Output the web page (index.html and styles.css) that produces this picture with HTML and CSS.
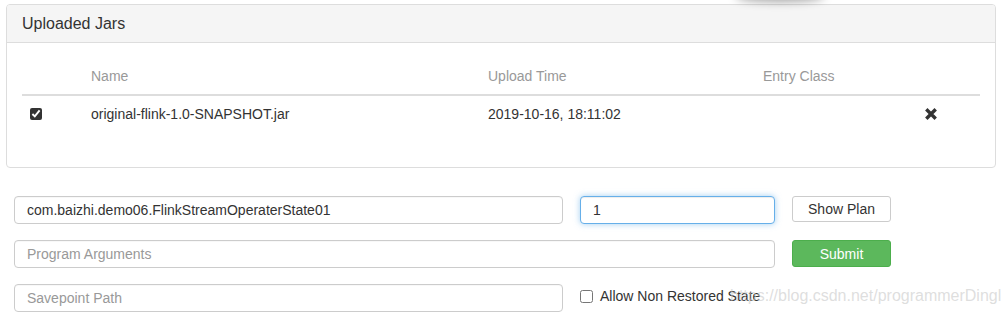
FILE: index.html
```html
<!DOCTYPE html>
<html lang="en">

<head>
    <meta charset="UTF-8">
    <title>Flink | Submit new Job</title>
    <link rel="stylesheet" href="styles.css">
</head>

<body>
    <div class="top-shadow"></div>

    <div class="panel">
        <div class="panel-heading">Uploaded Jars</div>
        <div class="panel-body">
            <table class="jar-table">
                <thead>
                    <tr>
                        <th class="col-check"></th>
                        <th class="col-name">Name</th>
                        <th class="col-time">Upload Time</th>
                        <th class="col-entry">Entry Class</th>
                        <th></th>
                    </tr>
                </thead>
                <tbody>
                    <tr>
                        <td><input type="checkbox" class="jar-check" checked></td>
                        <td>original-flink-1.0-SNAPSHOT.jar</td>
                        <td>2019-10-16, 18:11:02</td>
                        <td></td>
                        <td>
                            <svg class="remove-icon" width="12" height="12" viewBox="0 0 12 12">
                                <path d="M2.5 2.5 L9.5 9.5 M9.5 2.5 L2.5 9.5" stroke="#333" stroke-width="3.4" stroke-linecap="square" />
                            </svg>
                        </td>
                    </tr>
                </tbody>
            </table>
        </div>
    </div>

    <form class="job-form">
        <input type="text" class="field" value="com.baizhi.demo06.FlinkStreamOperaterState01">
        <input type="text" class="field focused" value="1">
        <button type="button" class="btn btn-default">Show Plan</button>

        <input type="text" class="field wide" placeholder="Program Arguments">
        <button type="button" class="btn btn-success">Submit</button>

        <input type="text" class="field" placeholder="Savepoint Path">
        <label class="allow-check"><input type="checkbox"> Allow Non Restored State</label>
    </form>

    <div class="watermark">https://blog.csdn.net/programmerDingl</div>
</body>

</html>
```

FILE: styles.css
```css
body {
    margin: 0;
    padding: 4px 0 0 6px;
    font-family: "Liberation Sans", Arial, sans-serif;
    font-size: 14px;
    color: #333;
    background: #fff;
    position: relative;
    overflow: hidden;
    height: 312px;
}

.top-shadow {
    position: absolute;
    left: 735px;
    top: -10px;
    width: 90px;
    height: 12px;
    border-radius: 50%;
    background: rgba(0, 0, 0, 0.35);
    filter: blur(4px);
}

.panel {
    width: 988px;
    border: 1px solid #ddd;
    border-radius: 4px;
    margin-bottom: 28px;
}

.panel-heading {
    background: #f5f5f5;
    border-bottom: 1px solid #ddd;
    border-radius: 3px 3px 0 0;
    padding: 10px 15px;
    font-size: 16px;
    line-height: 17px;
}

.panel-body {
    padding: 15px;
}

.jar-table {
    width: 100%;
    border-collapse: collapse;
    margin-bottom: 20px;
}

.jar-table th,
.jar-table td {
    padding: 8px;
    line-height: 20px;
    text-align: left;
    vertical-align: middle;
}

.jar-table th {
    font-weight: normal;
    color: #999;
    border-bottom: 2px solid #ddd;
}

.col-check {
    width: 45px;
}

.col-name {
    width: 381px;
}

.col-time {
    width: 259px;
}

.col-entry {
    width: 146px;
}

.jar-check {
    margin: 0;
    width: 12px;
    height: 12px;
    accent-color: #333;
    display: block;
}

.remove-icon {
    display: block;
}

.job-form {
    display: grid;
    grid-template-columns: 549px 195px 99px;
    column-gap: 17px;
    row-gap: 16px;
    margin-left: 8px;
    align-items: start;
}

.field {
    box-sizing: border-box;
    height: 28px;
    border: 1px solid #ccc;
    border-radius: 4px;
    padding: 0 12px;
    font-family: inherit;
    font-size: 14px;
    color: #333;
    outline: none;
    box-shadow: inset 0 1px 1px rgba(0, 0, 0, 0.03);
}

.field::placeholder {
    color: #999;
}

.field.focused {
    border-color: #66afe9;
    box-shadow: inset 0 1px 1px rgba(0, 0, 0, .075), 0 0 6px rgba(102, 175, 233, .6);
}

.field.wide {
    grid-column: span 2;
}

.btn {
    box-sizing: border-box;
    height: 26px;
    border: 1px solid #ccc;
    border-radius: 3px;
    font-family: inherit;
    font-size: 14px;
    padding: 0 10px;
    cursor: pointer;
}

.btn-default {
    background: #fff;
    color: #333;
}

.btn-success {
    height: 27px;
    background: #5cb85c;
    border-color: #4cae4c;
    color: #fff;
}

.allow-check {
    display: flex;
    align-items: center;
    gap: 7px;
    height: 24px;
    grid-column: span 2;
}

.allow-check input {
    margin: 0;
    width: 13px;
    height: 13px;
}

.watermark {
    position: absolute;
    left: 730px;
    top: 287px;
    font-size: 16px;
    color: rgba(200, 200, 200, 0.6);
    white-space: nowrap;
}
```
